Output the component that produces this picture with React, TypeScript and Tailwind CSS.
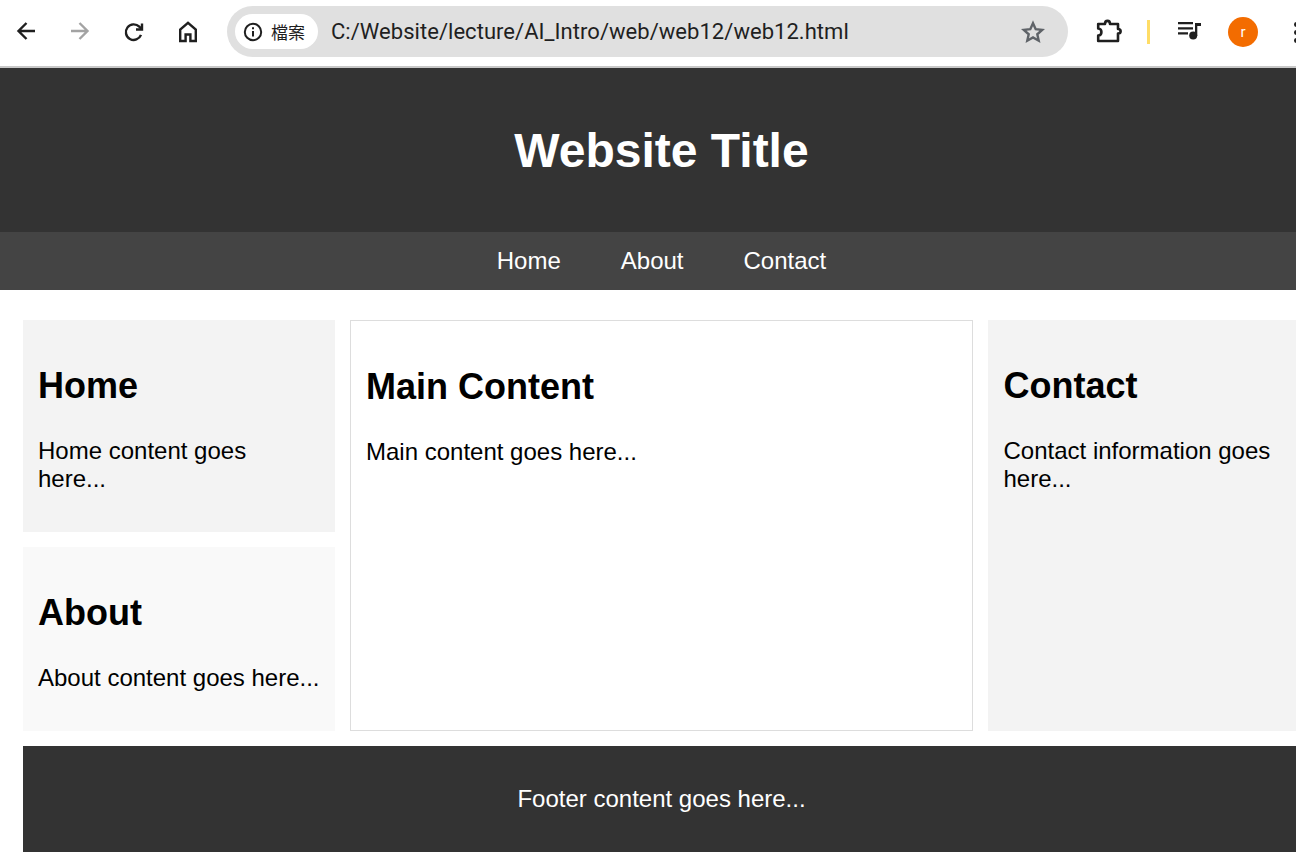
const sans = "font-['Liberation_Sans',Arial,sans-serif]";

const BrowserBar = () => {
  return (
    <div className="h-[68px] bg-white border-b-2 border-[#c8c8c8] flex items-center">
      {/* nav buttons */}
      <div className="w-[227px] h-full pb-[2px] flex items-center shrink-0">
        <svg className="ml-[14px] w-[24px] h-[24px]" viewBox="0 0 24 24" fill="none" stroke="#1f1f1f" strokeWidth="2.4">
          <path d="M21 11H5M12.5 3 4.5 11l8 8" />
        </svg>
        <svg className="ml-[30px] w-[24px] h-[24px]" viewBox="0 0 24 24" fill="none" stroke="#a3a3a3" strokeWidth="2.4">
          <path d="M3 11h16M11.5 3l8 8-8 8" />
        </svg>
        <svg className="ml-[30px] w-[24px] h-[24px]" viewBox="0 0 24 24" fill="none" stroke="#1f1f1f" strokeWidth="2.4">
          <path d="M19 14.9A7.8 7.8 0 1 1 17.3 6.7L20 9.5" />
          <path d="M20 3.5V9.5H14" />
        </svg>
        <svg className="ml-[30px] w-[24px] h-[24px]" viewBox="0 0 24 24" fill="none" stroke="#1f1f1f" strokeWidth="2.4">
          <path d="M4.2 21V9.5L12 2.8l7.8 6.7V21h-5.4v-6.5H9.6V21Z" />
        </svg>
      </div>

      {/* address bar */}
      <div className="w-[841px] h-[51px] mb-[3px] rounded-full bg-[#e0e0e0] flex items-center shrink-0 pl-[8px]">
        <div className="w-[83px] h-[35px] rounded-full bg-white flex items-center pl-[8px] gap-[8px]">
          <svg className="w-[20px] h-[20px]" viewBox="0 0 20 20" fill="none" stroke="#1f1f1f" strokeWidth="2">
            <circle cx="10" cy="10" r="8.2" />
            <path d="M10 9v5.5M10 5.2v2" />
          </svg>
          <span className="text-[17px] leading-none text-[#1f1f1f] font-['Noto_Sans_CJK_TC',sans-serif]">檔案</span>
        </div>
        <span className="ml-[13px] text-[22px] tracking-[0.04px] text-[#1f1f1f] font-['Roboto',sans-serif]">
          C:/Website/lecture/AI_Intro/web/web12/web12.html
        </span>
        <svg className="ml-auto mr-[23px] w-[24px] h-[24px]" viewBox="0 0 24 24" fill="none" stroke="#5f6368" strokeWidth="2.4">
          <path d="M12 3.2l2.7 6 6.5.7-4.9 4.4 1.4 6.4-5.7-3.3-5.7 3.3 1.4-6.4-4.9-4.4 6.5-.7Z" />
        </svg>
      </div>

      {/* toolbar right side */}
      <div className="flex items-center h-full pb-[2px]">
        <svg className="ml-[28px] w-[26px] h-[26px]" viewBox="0 1 26 26" fill="none" stroke="#1f1f1f" strokeWidth="2.6" strokeLinejoin="round">
          <path d="M2.2 6H9C9 1.8 14 1.8 14 6H22V11C25.5 11 25.5 15.5 22 15.5V23H2.2V17.5C6.5 17.5 6.5 10.5 2.2 10.5Z" />
        </svg>
        <div className="ml-[25px] w-[3px] h-[24px] bg-[#ffdd66]" />
        <svg className="ml-[28px] w-[24px] h-[20px]" viewBox="0 0 24 20" fill="#1f1f1f">
          <path d="M0 0h15v2.2H0ZM0 5.2h15v2.2H0ZM0 10.2h10v2.2H0Z" />
          <path d="M17 1h6v3h-3.7v10h-2.3Z" />
          <circle cx="15.2" cy="13.5" r="4" />
        </svg>
        <div className={`ml-[26px] w-[30px] h-[30px] rounded-full bg-[#f36c00] text-white text-[15px] flex items-center justify-center font-['Roboto',sans-serif]`}>
          r
        </div>
        <div className="ml-[36px] flex flex-col gap-[3px] shrink-0">
          <div className="w-[5px] h-[5px] rounded-full bg-[#1f1f1f]" />
          <div className="w-[5px] h-[5px] rounded-full bg-[#1f1f1f]" />
          <div className="w-[5px] h-[5px] rounded-full bg-[#1f1f1f]" />
        </div>
      </div>
    </div>
  );
};

const Card = ({ title, text, className }: { title: string; text: string; className: string }) => {
  return (
    <section className={`p-[15px] ${className}`}>
      <h2 className="text-[36px] leading-[41px] font-bold mt-[30px] mb-[31px] text-black">{title}</h2>
      <p className="text-[24px] leading-[28px] text-black">{text}</p>
    </section>
  );
};

export default function App() {
  return (
    <div className={`w-[1296px] h-[864px] overflow-hidden bg-white ${sans}`}>
      <BrowserBar />
      <div className="w-[1323px]">
        <header className="h-[164px] pt-[2px] bg-[#333333] flex items-center justify-center">
          <h1 className="text-[48px] font-bold text-white leading-none">Website Title</h1>
        </header>
        <nav className="h-[58px] bg-[#444444] flex items-center justify-center gap-[60px] text-[24px] text-white">
          <a>Home</a>
          <a>About</a>
          <a>Contact</a>
        </nav>
        <main className="pl-[23px] pt-[30px]">
          <div className="grid grid-cols-[312px_623px_312px] gap-x-[15px] w-[1277px]">
            <div className="flex flex-col gap-[15px] h-[411px]">
              <Card title="Home" text="Home content goes here..." className="bg-[#f3f3f3] h-[212px]" />
              <Card title="About" text="About content goes here..." className="bg-[#f9f9f9] flex-1" />
            </div>
            <Card title="Main Content" text="Main content goes here..." className="border border-[#dddddd]" />
            <Card title="Contact" text="Contact information goes here..." className="bg-[#f3f3f3] pl-[15.5px]" />
          </div>
          <footer className="mt-[15px] w-[1277px] h-[106px] bg-[#333333] text-white text-[24px] flex items-center justify-center">
            Footer content goes here...
          </footer>
        </main>
      </div>
    </div>
  );
}
